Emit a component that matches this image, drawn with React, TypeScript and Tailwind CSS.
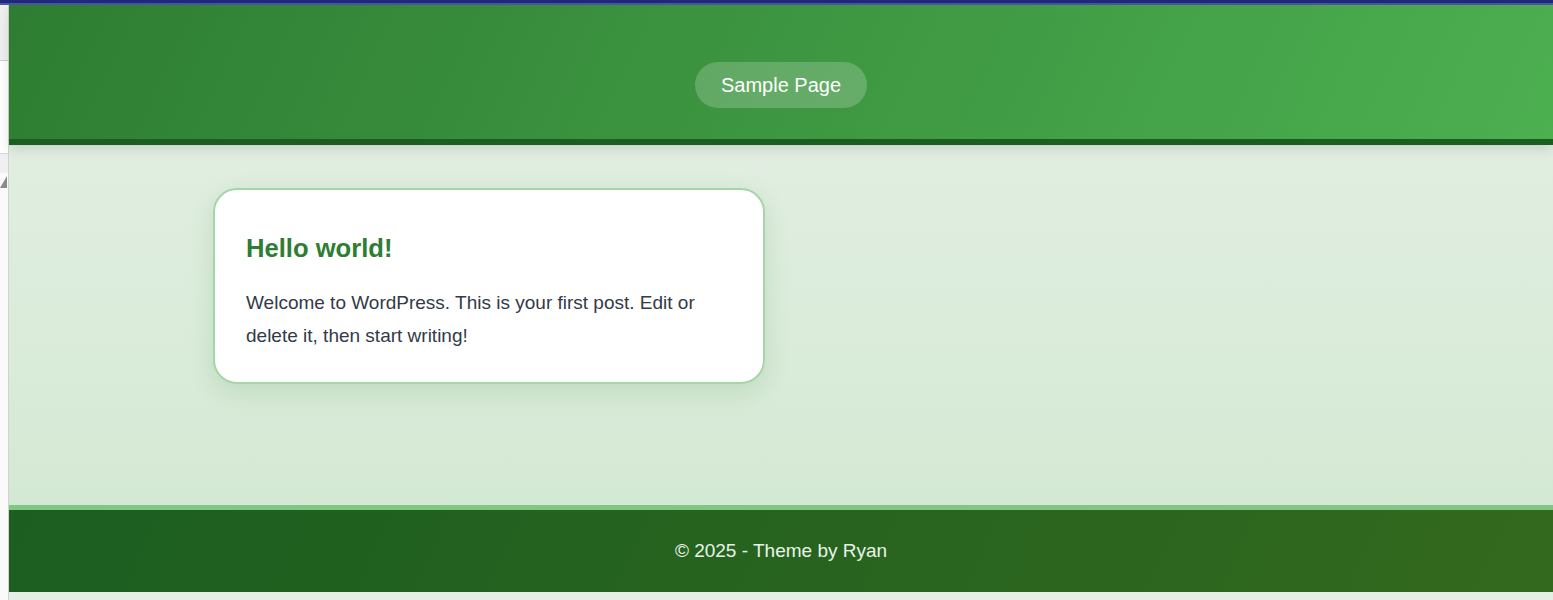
export default function App() {
  return (
    <div className="flex min-h-[600px] flex-col bg-[#e6efe6] font-['Liberation_Sans',Arial,sans-serif]">
      <div className="h-[3px] bg-[#1f2a7c]" />
      <div className="h-[2px] bg-[#4b56a6]" />

      <div className="flex flex-1">
        {/* browser side strip */}
        <aside className="flex w-[9px] shrink-0 flex-col border-r border-[#d2d2d2] bg-[#fafafa]">
          <div className="h-[56px] border-b border-[#cfcfcf] bg-[#f0f0f0]" />
          <div className="h-[93px] border-b border-[#d6d6d6] bg-white" />
          <div className="h-[19px] bg-[#f0f0f0]" />
          <div className="relative h-[20px]">
            <div className="absolute left-0 top-[3px] h-0 w-0 border-b-[12px] border-l-[7px] border-b-[#8a8a8a] border-l-transparent" />
          </div>
        </aside>

        <div className="flex flex-1 flex-col">
          {/* header */}
          <header className="relative z-10 flex h-[140px] justify-center border-b-[6px] border-[#1b5e20] bg-[linear-gradient(115deg,#2e7d32_0%,#4caf50_100%)] pt-[57px] shadow-[0_4px_12px_rgba(0,0,0,0.12)]">
            <a className="flex h-[46px] items-center rounded-full bg-white/20 px-[26px] text-[20px] text-white">
              Sample Page
            </a>
          </header>

          {/* content */}
          <main className="h-[360px] bg-[linear-gradient(180deg,#e1eee1_0%,#d4e9d4_100%)] pt-[43px]">
            <div className="mx-auto grid w-[1200px] grid-cols-2 gap-8 px-8">
              <article className="rounded-[24px] border-2 border-[#a5d6a7] bg-white px-[31px] pb-[30px] pt-[44px] shadow-[0_8px_24px_rgba(46,125,50,0.15)]">
                <h2 className="mb-[23px] text-[25.6px] font-bold leading-[1.15] text-[#2e7d32]">Hello world!</h2>
                <p className="text-[19px] leading-[33px] text-[#333a48]">
                  Welcome to WordPress. This is your first post. Edit or delete it, then start writing!
                </p>
              </article>
            </div>
          </main>

          {/* footer */}
          <footer className="flex h-[87px] items-center justify-center border-t-[5px] border-[#81c784] bg-[linear-gradient(115deg,#1b5e20_0%,#33691e_100%)]">
            <p className="text-[19px] text-[#e8f5e9]">© 2025 - Theme by Ryan</p>
          </footer>
        </div>
      </div>
    </div>
  );
}
